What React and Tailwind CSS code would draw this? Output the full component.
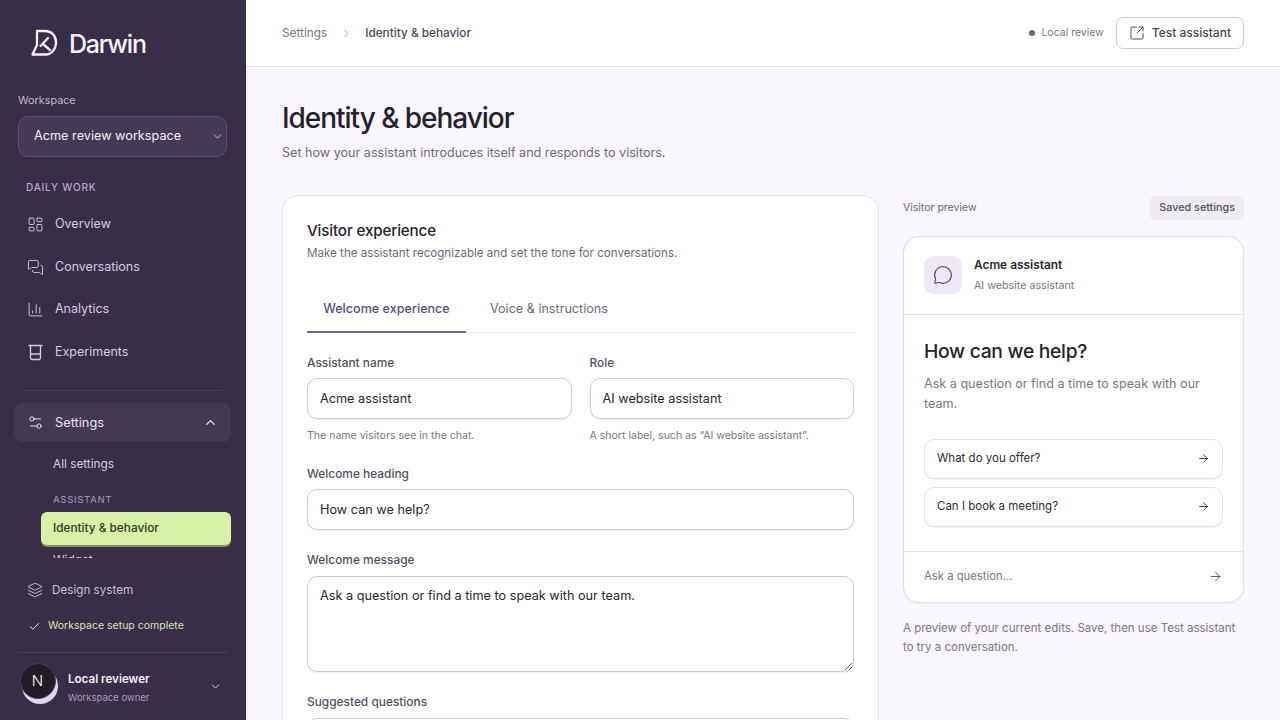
import React from "react";
import { LayoutDashboard, MessagesSquare, ChartColumn, Settings2, ChevronUp, ChevronDown, Layers, Check, SquareArrowOutUpRight, MessageCircle, ArrowRight, ChevronRight } from "lucide-react";

function Logo() {
  return (
    <svg width="28" height="29" viewBox="0 0 28 29" fill="none" stroke="#f6f2fb" strokeWidth="2.3" strokeLinecap="round" strokeLinejoin="round" className="shrink-0">
      <path d="M7 2h8.5C21.5 2 26 7 26 13.5S21.5 25.5 15.5 25.5H2.5L7 16z" />
      <path d="M10.5 17 18 9M13.5 15.5l6.5 5.5" />
    </svg>
  );
}

function BeakerIcon() {
  return (
    <svg width="17" height="17" viewBox="0 0 17 17" fill="none" stroke="#d5cde0" strokeWidth="1.3" strokeLinecap="round" strokeLinejoin="round" className="shrink-0">
      <path d="M2 1.5h13M3.5 1.5v12.5a1.5 1.5 0 0 0 1.5 1.5h7a1.5 1.5 0 0 0 1.5-1.5V1.5M3.5 10h10" />
    </svg>
  );
}

function NavItem({ icon, label }) {
  return (
    <div className="flex h-[42.5px] shrink-0 items-center gap-[11px] pl-[27px] text-[12.5px] text-[#d5cde0]">
      {icon}
      <span>{label}</span>
    </div>
  );
}

function Field({ label, value, hint }) {
  return (
    <div className="flex flex-col">
      <span className="text-[11.9px] font-medium leading-[16px] text-[#55505e]">{label}</span>
      <div className="mt-[7.5px] flex h-[41px] items-center rounded-[10px] border border-[#cfccd5] bg-white px-[12px] text-[12.7px] text-[#2a2630] shadow-[0_1px_1px_rgba(40,30,60,0.06)]">{value}</div>
      {hint ? <span className="mt-[9.5px] text-[10.55px] leading-[14px] text-[#7a7682]">{hint}</span> : null}
    </div>
  );
}

function Question({ text }) {
  return (
    <div className="flex h-[40px] items-center justify-between rounded-[10px] border border-[#e5e2ea] bg-white pl-[12px] pr-[12px] text-[11.5px] text-[#2f2b36] shadow-[0_1px_1px_rgba(40,30,60,0.05)]">
      <span>{text}</span>
      <ArrowRight size={13} strokeWidth={1.7} color="#2f2b36" />
    </div>
  );
}

export default function App() {
  const sidebarIcon = { size: 17, strokeWidth: 1.3, color: "#d5cde0", className: "shrink-0" };
  return (
    <div className="flex h-screen w-full overflow-hidden bg-[#f9f7fd] font-['Inter',sans-serif]">
      <aside className="flex h-full w-[246px] shrink-0 flex-col bg-[#382e46] pb-[16.5px]">
        <div className="flex items-center gap-[11px] pl-[30px] pt-[29px]">
          <Logo />
          <span className="text-[25px] font-medium leading-[28px] tracking-[-0.05em] text-[#f6f2fb]">Darwin</span>
        </div>
        <div className="mt-[36px] pl-[18px] pr-[19px]">
          <div className="text-[10.8px] leading-[14px] text-[#c3b8d1]">Workspace</div>
          <div className="mt-[7.5px] flex h-[41px] items-center justify-between rounded-[10px] border border-[#5b4f6b] bg-[#443a54] pl-[15px] pr-[2px] text-[12.7px] font-normal text-[#f2eef7]">
            <span>Acme review workspace</span>
            <ChevronDown size={13} strokeWidth={1.6} color="#d5cde0" />
          </div>
        </div>
        <div className="mt-[23.5px] flex min-h-0 flex-1 flex-col overflow-hidden">
          <div className="pl-[26px] text-[10px] font-medium leading-[14px] tracking-[0.08em] text-[#b5a9c4]">DAILY WORK</div>
          <div className="mt-[9.5px] flex flex-col">
            <NavItem icon={<LayoutDashboard {...sidebarIcon} />} label="Overview" />
            <NavItem icon={<MessagesSquare {...sidebarIcon} />} label="Conversations" />
            <NavItem icon={<ChartColumn {...sidebarIcon} />} label="Analytics" />
            <NavItem icon={<BeakerIcon />} label="Experiments" />
          </div>
          <div className="mx-[24px] mt-[16.5px] h-px shrink-0 bg-[#4a3f59]" />
          <div className="ml-[14px] mr-[15px] mt-[12px] flex h-[39px] shrink-0 items-center gap-[11px] rounded-[8px] bg-[#433951] pl-[13px] pr-[13px] text-[12.8px] text-[#eae5f0]">
            <Settings2 size={17} strokeWidth={1.4} color="#eae5f0" />
            <span className="flex-1">Settings</span>
            <ChevronUp size={15} strokeWidth={2} color="#eae5f0" />
          </div>
          <div className="mt-[13.5px] pl-[53px] text-[11.8px] leading-[16px] text-[#d5cde0]">All settings</div>
          <div className="mt-[21.5px] pl-[53px] text-[9.5px] font-medium leading-[14px] tracking-[0.07em] text-[#9b8fab]">ASSISTANT</div>
          <div className="ml-[41px] mr-[15px] mt-[5px] flex h-[33px] shrink-0 items-center rounded-[6px] bg-[#d9f0a8] pl-[12px] text-[11.8px] font-medium text-[#2e3a22] shadow-[0_2px_0_#7f8f5f]">Identity &amp; behavior</div>
          <div className="mt-[7px] shrink-0 pl-[53px] text-[11.8px] leading-[16px] text-[#d5cde0]">Widget</div>
        </div>
        <div className="flex items-center gap-[9px] pl-[27px] pt-[23.5px] text-[11.7px] leading-[16px] text-[#c9bfd6]">
          <Layers size={16} strokeWidth={1.3} color="#d5cde0" />
          <span>Design system</span>
        </div>
        <div className="mt-[21.5px] flex items-center gap-[7px] pl-[28px] text-[10.5px] leading-[14px] text-[#d8e3bd]">
          <Check size={13} strokeWidth={1.7} color="#eef3df" />
          <span>Workspace setup complete</span>
        </div>
        <div className="mx-[18px] mt-[19px] h-px bg-[#4a3f59]" />
        <div className="mt-[10px] flex items-start pl-[19.5px] pr-[24px]">
          <div className="flex h-[36px] w-[36px] shrink-0 items-center justify-center rounded-full border border-[#4b4355] bg-[#211c26] text-[15px] font-light text-white shadow-[2px_5px_0_#e0d8ee]">N</div>
          <div className="ml-[12.5px] mt-[7.5px] flex flex-1 flex-col">
            <span className="text-[11.6px] font-semibold leading-[16px] text-[#f2eef7]">Local reviewer</span>
            <span className="mt-[4px] text-[9.5px] leading-[13px] text-[#a99db8]">Workspace owner</span>
          </div>
          <ChevronDown size={13} strokeWidth={1.7} color="#e0d8ee" className="mt-[17px]" />
        </div>
      </aside>

      <main className="flex min-w-0 flex-1 flex-col">
        <header className="flex h-[67px] shrink-0 items-center justify-between border-b border-[#e3e0e8] bg-white pl-[36px] pr-[36px]">
          <div className="flex items-center text-[11.8px] leading-[18px]">
            <span className="text-[#7a7682]">Settings</span>
            <ChevronRight size={13} strokeWidth={1.3} color="#8a8692" className="mx-[12.5px]" />
            <span className="font-medium text-[#4b4753]">Identity &amp; behavior</span>
          </div>
          <div className="flex items-center">
            <span className="h-[6px] w-[6px] rounded-full bg-[#6c6874]" />
            <span className="ml-[6px] text-[10.5px] text-[#7a7682]">Local review</span>
            <div className="ml-[12px] flex h-[32px] items-center gap-[7px] rounded-[7px] border border-[#cfccd5] bg-white px-[12px] text-[12px] font-medium text-[#4b4753]">
              <SquareArrowOutUpRight size={16} strokeWidth={1.5} color="#4b4753" />
              <span>Test assistant</span>
            </div>
          </div>
        </header>

        <div className="flex min-h-0 flex-1 flex-col overflow-hidden px-[36px]">
          <h1 className="mt-[33px] text-[28px] font-medium leading-[36px] tracking-[-0.037em] text-[#26222c]">Identity &amp; behavior</h1>
          <p className="mt-[8px] text-[12.6px] leading-[18px] text-[#6e6a76]">Set how your assistant introduces itself and responds to visitors.</p>

          <div className="mt-[33px] grid grid-cols-[597px_341px] gap-[24px]">
            <section className="rounded-[16px] border border-[#e5e2ea] bg-white px-[24px] pt-[25px] pb-[24px]">
              <h2 className="text-[15.2px] font-medium leading-[20px] tracking-[-0.01em] text-[#26222c]">Visitor experience</h2>
              <p className="mt-[4px] text-[11.6px] leading-[16px] text-[#6e6a76]">Make the assistant recognizable and set the tone for conversations.</p>

              <div className="mt-[33px] flex h-[39px] border-b border-[#ece9f0] text-[12.6px]">
                <div className="-mb-px flex w-[159px] items-center justify-center border-b-2 border-[#75648f] pb-[7px] font-medium text-[#5e4f78]">Welcome experience</div>
                <div className="ml-[24px] flex items-center pb-[7px] text-[#6e6a76]">Voice &amp; instructions</div>
              </div>

              <div className="mt-[21.5px] grid grid-cols-2 gap-[18px]">
                <Field label="Assistant name" value="Acme assistant" hint="The name visitors see in the chat." />
                <Field label="Role" value="AI website assistant" hint="A short label, such as “AI website assistant”." />
              </div>
              <div className="mt-[23px]">
                <Field label="Welcome heading" value="How can we help?" />
              </div>
              <div className="mt-[22px] flex flex-col">
                <span className="text-[11.9px] font-medium leading-[16px] text-[#55505e]">Welcome message</span>
                <textarea
                  readOnly
                  value="Ask a question or find a time to speak with our team."
                  className="mt-[7.5px] h-[96px] w-full rounded-[10px] border border-[#cfccd5] bg-white px-[12px] py-[10px] text-[12.7px] leading-[18px] text-[#2a2630] outline-none shadow-[0_1px_1px_rgba(40,30,60,0.06)]"
                />
              </div>
              <div className="mt-[22px] text-[11.9px] font-medium leading-[16px] text-[#55505e]">Suggested questions</div>
              <div className="mt-[8px] h-[41px] rounded-[10px] border border-[#cfccd5] bg-white" />
            </section>

            <aside className="flex flex-col">
              <div className="flex h-[25px] items-center justify-between">
                <span className="text-[10.5px] text-[#6e6a76]">Visitor preview</span>
                <span className="flex h-[24px] items-center rounded-[5px] bg-[#eeebf3] px-[9px] pt-[1px] text-[10.8px] font-medium text-[#55505e]">Saved settings</span>
              </div>
              <div className="mt-[15.5px] flex flex-col rounded-[16px] border border-[#e0dde6] bg-white shadow-[0_1px_2px_rgba(40,30,60,0.05)]">
                <div className="flex h-[78.5px] items-center border-b border-[#dedbe4] px-[20px]">
                  <div className="flex h-[38px] w-[38px] items-center justify-center rounded-[9px] bg-[#eee9f6]">
                    <MessageCircle size={20} strokeWidth={1.4} color="#564670" />
                  </div>
                  <div className="ml-[12px] flex flex-col">
                    <span className="text-[11.9px] font-semibold leading-[16px] text-[#2a2630]">Acme assistant</span>
                    <span className="mt-[6px] text-[10.7px] leading-[14px] text-[#7a7682]">AI website assistant</span>
                  </div>
                </div>
                <div className="px-[20px] pt-[24px] pb-[24.5px]">
                  <h3 className="text-[19.3px] font-medium leading-[24px] tracking-[-0.015em] text-[#26222c]">How can we help?</h3>
                  <p className="mt-[10.5px] text-[12.6px] leading-[20.5px] text-[#7a7682]">Ask a question or find a time to speak with our team.</p>
                  <div className="mt-[24px] flex flex-col gap-[8px]">
                    <Question text="What do you offer?" />
                    <Question text="Can I book a meeting?" />
                  </div>
                </div>
                <div className="flex h-[50.5px] items-center justify-between border-t border-[#e5e2ea] pb-[1px] pl-[20px] pr-[20px] text-[11.3px] text-[#7a7682]">
                  <span>Ask a question...</span>
                  <ArrowRight size={15} strokeWidth={1.5} color="#55505e" />
                </div>
              </div>
              <p className="mt-[16px] text-[11.5px] leading-[19px] text-[#7a7682]">A preview of your current edits. Save, then use Test assistant to try a conversation.</p>
            </aside>
          </div>
        </div>
      </main>
    </div>
  );
}
